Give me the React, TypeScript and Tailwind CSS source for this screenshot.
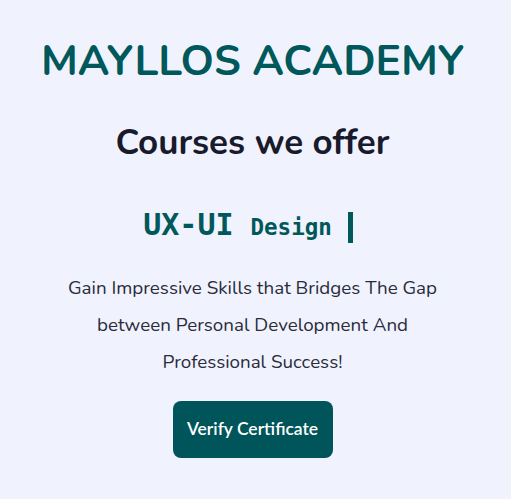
import React from 'react';

const App = () => {
    return (
        <div className="min-h-screen w-full bg-[#f0f3fe] flex flex-col items-center pt-[36px] pr-[6px] font-['Nunito','Lato','Noto_Sans',sans-serif]">
            <h1 className="text-[42.5px] leading-[50px] font-bold text-[#00585a]">MAYLLOS ACADEMY</h1>
            <h2 className="mt-[37px] text-[35px] leading-[40px] font-bold text-[#191a2c]">Courses we offer</h2>
            <div className="mt-[45px] mr-[9px] flex items-end font-['DejaVu_Sans_Mono',monospace] font-bold text-[#00585a]">
                <div className="flex items-baseline">
                    <span className="text-[30px] leading-[34px]">UX-UI</span>
                    <span className="ml-[17px] text-[22.5px] leading-[34px]">Design</span>
                </div>
                <span className="ml-[16px] mb-[1px] w-[5px] h-[31px] bg-[#00585a]"></span>
            </div>
            <p className="mt-[26px] text-center text-[18.8px] leading-[37px] text-[#2a2b3a]">
                Gain Impressive Skills that Bridges The Gap
                <br />
                between Personal Development And
                <br />
                Professional Success!
            </p>
            <button className="mt-[20px] w-[160px] h-[57px] rounded-lg bg-[#00555a] text-white text-[17.5px] font-semibold font-['Lato',sans-serif]">
                Verify Certificate
            </button>
        </div>
    )
}

export default App
